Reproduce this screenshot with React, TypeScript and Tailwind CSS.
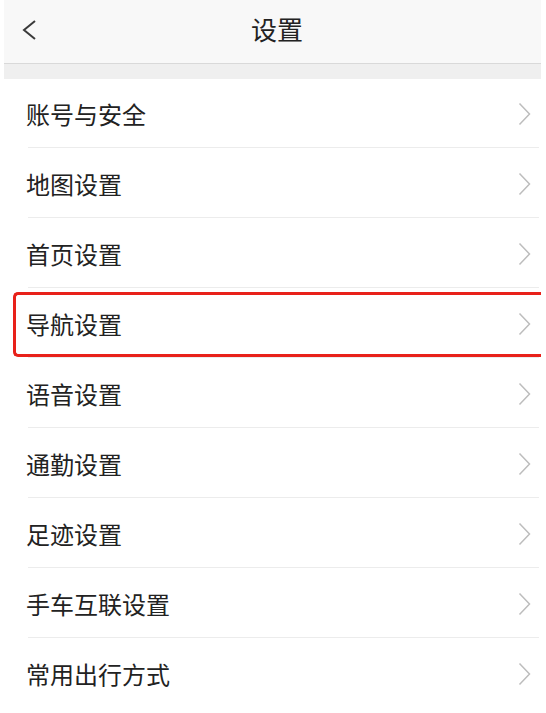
const items = [
  "账号与安全",
  "地图设置",
  "首页设置",
  "导航设置",
  "语音设置",
  "通勤设置",
  "足迹设置",
  "手车互联设置",
  "常用出行方式",
];

function Chevron() {
  return (
    <svg width="13" height="24" viewBox="0 0 13 24" fill="none">
      <polyline points="1.5,1.5 11.5,12 1.5,22.5" stroke="#bdbdbd" strokeWidth="1.5" />
    </svg>
  );
}

export default function App() {
  return (
    <div
      className="w-[546px] h-[713px] bg-white overflow-hidden"
      style={{ fontFamily: '"Noto Sans CJK SC", "Noto Sans", sans-serif' }}
    >
      <div className="ml-[4px] w-[537px]">
        <div className="relative h-[64px] bg-[#f8f8f8] border-b border-[#d9d9d9] flex items-center justify-center">
          <svg className="absolute left-[18px] top-[19px]" width="15" height="22" viewBox="0 0 15 22" fill="none">
            <polyline points="13,2 2,11 13,20" stroke="#3a3a3a" strokeWidth="2" />
          </svg>
          <span className="text-[26px] text-[#222] leading-none ml-[9px] -mt-[6px]">设置</span>
        </div>
        <div className="h-[15px] bg-[#efefef]" />
        {items.map((label, i) => (
          <div key={label} className="relative h-[70px]">
            <div className="h-full flex items-center justify-between pl-[22px] pr-[10px]">
              <span className="text-[24px] text-[#222] leading-none">{label}</span>
              <Chevron />
            </div>
            {i < items.length - 1 && (
              <div className="absolute bottom-[1px] left-[24px] right-[2px] h-px bg-[#ececec]" />
            )}
            {label === "导航设置" && (
              <div className="absolute left-[9px] right-0 top-[3px] bottom-[2px] border-[3px] border-r-0 border-[#e8211a] rounded-l-[5px]" />
            )}
          </div>
        ))}
      </div>
    </div>
  );
}
